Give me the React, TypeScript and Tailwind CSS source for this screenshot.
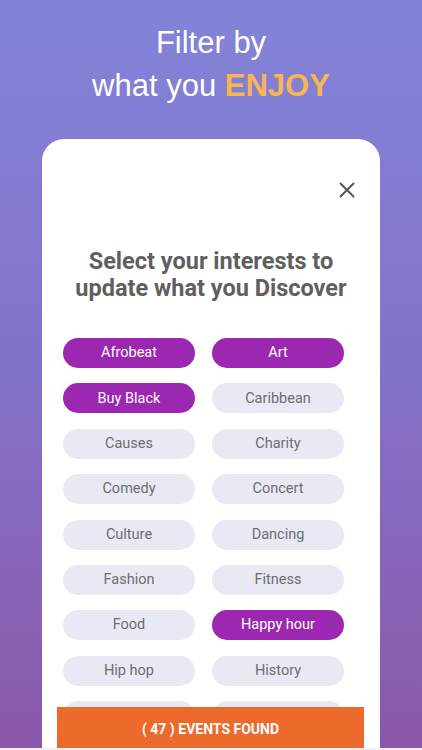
import React from "react";

const interests = [
  { name: "Afrobeat", on: true },
  { name: "Art", on: true },
  { name: "Buy Black", on: true },
  { name: "Caribbean", on: false },
  { name: "Causes", on: false },
  { name: "Charity", on: false },
  { name: "Comedy", on: false },
  { name: "Concert", on: false },
  { name: "Culture", on: false },
  { name: "Dancing", on: false },
  { name: "Fashion", on: false },
  { name: "Fitness", on: false },
  { name: "Food", on: false },
  { name: "Happy hour", on: true },
  { name: "Hip hop", on: false },
  { name: "History", on: false },
  // next row sits under the footer button
  { name: "", on: false },
  { name: "", on: false },
];

const Chip = ({ name, on }: { name: string; on: boolean }) => (
  <div
    className={`h-[30px] rounded-full flex items-center justify-center text-[14.5px] ${
      on ? "bg-[#9c27b0] text-white" : "bg-[#e8e9f2] text-[#6c6d73]"
    }`}
  >
    {name}
  </div>
);

const App = () => {
  return (
    <div className="h-[750px] w-full overflow-hidden flex flex-col bg-gradient-to-b from-[#8284d9] via-[#8372c9] to-[#8a57aa]">
      <h1 className="pt-[21px] text-center text-white text-[31px] leading-[43px] font-['Liberation_Sans',Arial,sans-serif]">
        Filter by
        <br />
        what you <span className="font-bold text-[#f8b552]">ENJOY</span>
      </h1>

      <div className="relative mt-[32px] ml-[42px] w-[338px] flex-1 bg-white rounded-t-[22px] overflow-hidden font-['Roboto','Noto_Sans',sans-serif]">
        <div className="flex justify-end pt-[43px] pr-[25px]">
          <svg width="16" height="16" viewBox="0 0 16 16" className="text-[#555]">
            <path d="M1.5 1.5L14.5 14.5M14.5 1.5L1.5 14.5" stroke="currentColor" strokeWidth="2" strokeLinecap="round" />
          </svg>
        </div>

        <h2 className="mt-[50px] text-center text-[23.5px] leading-[27px] font-bold text-[#5f5f5f]">
          Select your interests to
          <br />
          update what you Discover
        </h2>

        <div className="mt-[36px] ml-[21px] grid grid-cols-[132px_132px] gap-x-[17px] gap-y-[15.4px]">
          {interests.map((i, n) => (
            <Chip key={n} name={i.name} on={i.on} />
          ))}
        </div>

        <button className="absolute left-[15px] bottom-0 w-[307px] h-[41px] pt-[3px] bg-[#ec6b2c] text-white font-bold text-[14px]">
          ( 47 ) EVENTS FOUND
        </button>
      </div>
      <div className="h-[2px] bg-[#f3f1f5]" />
    </div>
  );
};

export default App;
